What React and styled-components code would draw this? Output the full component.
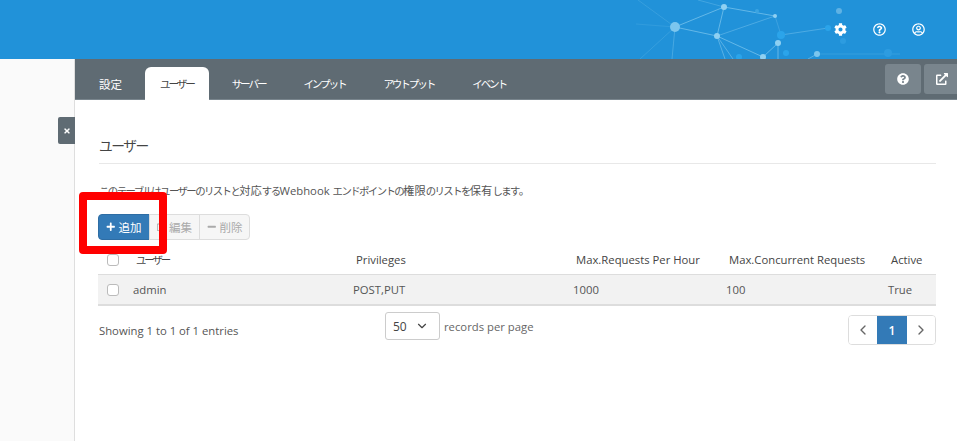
import React from 'react';
import styled, { createGlobalStyle } from 'styled-components';
import {
	FaCog,
	FaRegQuestionCircle,
	FaRegUserCircle,
	FaQuestionCircle,
	FaExternalLinkAlt,
	FaTimes,
	FaPlus,
	FaMinus,
	FaRegEdit,
} from 'react-icons/fa';
import { ChevronDown, ChevronLeft, ChevronRight } from 'lucide-react';

const TABS = ['設定', 'ユーザー', 'サーバー', 'インプット', 'アウトプット', 'イベント'];
const COLUMNS = '34px 220px 220px 153px 162px 1fr';

const NODES = [
	[675, 27, 5, '#7cc6ee'],
	[724, 7, 3, '#8fd0f2'],
	[717, 36, 3, '#8fd0f2'],
	[775, 16, 2, '#8fd0f2'],
	[778, 43, 3, '#8fd0f2'],
	[763, 57, 3, '#8fd0f2'],
	[817, 54, 3, '#7cc6ee'],
	[781, 35, 4, '#2ba4ea'],
	[786, 53, 3, '#2ba4ea'],
	[739, 57, 3, '#2ba4ea'],
	[757, 11, 2, '#3aa4e2'],
	[828, 28, 3, '#2ba4ea'],
	[839, 11, 3, '#5fb2e4'],
	[843, 41, 3, '#2d9ce0'],
	[888, 53, 4, '#2d9ce0'],
];
const LINES = [
	[675, 27, 724, 7, 0.6],
	[724, 7, 775, 16, 0.6],
	[724, 7, 717, 36, 0.6],
	[675, 27, 717, 36, 0.6],
	[717, 36, 775, 16, 0.4],
	[717, 36, 763, 57, 0.6],
	[763, 57, 778, 43, 0.6],
	[778, 43, 778, 59, 0.6],
	[781, 35, 828, 28, 0.4],
	[775, 16, 781, 35, 0.25],
	[817, 54, 900, 54, 0.2],
	[817, 54, 808, 59, 0.5],
	[717, 36, 725, 59, 0.5],
	[717, 36, 733, 59, 0.5],
	[675, 27, 672, 59, 0.35],
	[675, 27, 640, 59, 0.2],
	[675, 27, 636, 24, 0.15],
	[675, 27, 638, 0, 0.2],
	[724, 7, 698, 0, 0.3],
];

const Network = () => (
	<NetworkSvg viewBox="0 0 957 59">
		{LINES.map(([x1, y1, x2, y2, o], i) => (
			<line key={i} x1={x1} y1={y1} x2={x2} y2={y2} stroke="#8fd0f2" strokeOpacity={o} />
		))}
		{NODES.map(([cx, cy, r, fill], i) => (
			<circle key={i} cx={cx} cy={cy} r={r} fill={fill} />
		))}
	</NetworkSvg>
);

// the reference's Japanese face has narrow kana and full width kanji
const Ja = ({ children }) =>
	children
		.split(/([\u3040-\u30ff]+)/)
		.map((part, i) => (i % 2 ? <Kana key={i}>{part}</Kana> : part));

const App = () => (
	<Page>
		<GlobalStyle />
		<Header>
			<Network />
			<HeaderIcon>
				<FaCog />
			</HeaderIcon>
			<HeaderIcon>
				<FaRegQuestionCircle />
			</HeaderIcon>
			<HeaderIcon>
				<FaRegUserCircle />
			</HeaderIcon>
		</Header>
		<Body>
			<Sidebar>
				<SidebarToggle>
					<FaTimes />
				</SidebarToggle>
			</Sidebar>
			<Main>
				<TabBar>
					{TABS.map((t) => (
						<Tab key={t} active={t === 'ユーザー'}>
							<span>
								<Ja>{t}</Ja>
							</span>
						</Tab>
					))}
					<TabActions>
						<ActionButton>
							<FaQuestionCircle />
						</ActionButton>
						<ActionButton>
							<FaExternalLinkAlt />
						</ActionButton>
					</TabActions>
				</TabBar>
				<Content>
					<Title>
						<Ja>ユーザー</Ja>
					</Title>
					<Description>
						<Ja>このテーブルはユーザーのリストと対応するWebhook エンドポイントの権限のリストを保有します。</Ja>
					</Description>
					<Toolbar>
						<ToolButton primary>
							<FaPlus />
							追加
						</ToolButton>
						<ToolButton disabled>
							<FaRegEdit />
							編集
						</ToolButton>
						<ToolButton disabled>
							<FaMinus />
							削除
						</ToolButton>
						<Annotation />
					</Toolbar>
					<HeadRow>
						<CheckCell>
							<Check />
						</CheckCell>
						<span>
							<Ja>ユーザー</Ja>
						</span>
						<span>Privileges</span>
						<span>Max.Requests Per Hour</span>
						<span>Max.Concurrent Requests</span>
						<span>Active</span>
					</HeadRow>
					<DataRow>
						<CheckCell>
							<Check />
						</CheckCell>
						<span>admin</span>
						<span>POST,PUT</span>
						<span>1000</span>
						<span>100</span>
						<span>True</span>
					</DataRow>
					<Footer>
						<Entries>Showing 1 to 1 of 1 entries</Entries>
						<PerPage>
							<Select>
								50
								<ChevronDown size={14} strokeWidth={2} />
							</Select>
							records per page
						</PerPage>
						<Pager>
							<PageButton>
								<ChevronLeft size={16} />
							</PageButton>
							<PageButton current>1</PageButton>
							<PageButton>
								<ChevronRight size={16} />
							</PageButton>
						</Pager>
					</Footer>
				</Content>
			</Main>
		</Body>
	</Page>
);

const GlobalStyle = createGlobalStyle`
	html, body {
		margin: 0;
		background: #fff;
	}
	body {
		font-family: "Open Sans", "Noto Sans CJK JP", sans-serif;
		font-size: 11.3px;
		color: #555;
	}
`;
const Kana = styled.span`
	font-size: 0.92em;
	letter-spacing: -0.2em;
`;
const Page = styled.div`
	width: 957px;
	height: 441px;
	overflow: hidden;
	display: flex;
	flex-direction: column;
`;
const Header = styled.header`
	position: relative;
	height: 59px;
	flex: none;
	background: #2192d9;
	display: flex;
	align-items: center;
	justify-content: flex-end;
	padding: 0 32px 0 0;
	box-sizing: border-box;
`;
const NetworkSvg = styled.svg`
	position: absolute;
	left: 0;
	top: 0;
	width: 957px;
	height: 59px;
`;
const HeaderIcon = styled.div`
	position: relative;
	width: 13px;
	height: 13px;
	margin-left: 26px;
	color: #fff;
	font-size: 13px;
	line-height: 13px;
	display: flex;
	svg {
		display: block;
	}
`;
const Body = styled.div`
	flex: 1;
	display: flex;
	min-height: 0;
`;
const Sidebar = styled.aside`
	position: relative;
	width: 74px;
	flex: none;
	background: #fafafa;
	border-right: 1px solid #dedede;
`;
const SidebarToggle = styled.div`
	position: absolute;
	right: -1px;
	top: 58px;
	width: 17px;
	height: 27px;
	background: #5f6b73;
	border-radius: 2px 0 0 2px;
	color: #fff;
	font-size: 8px;
	display: flex;
	align-items: center;
	justify-content: center;
`;
const Main = styled.main`
	flex: 1;
	min-width: 0;
	display: flex;
	flex-direction: column;
`;
const TabBar = styled.nav`
	height: 40px;
	flex: none;
	background: #5f6b73;
	border-bottom: 1px solid #79858d;
	display: flex;
	align-items: flex-end;
	gap: 8px;
	padding-left: 9px;
`;
const Tab = styled.div`
	height: 33px;
	padding: 0 15px;
	display: flex;
	align-items: center;
	border-radius: 6px 6px 0 0;
	font-size: 11.5px;
	color: ${(props) => (props.active ? '#444' : '#fff')};
	background: ${(props) => (props.active ? '#fff' : 'transparent')};
	margin-bottom: -1px;
`;
const TabActions = styled.div`
	margin-left: auto;
	align-self: flex-start;
	display: flex;
	gap: 3px;
	padding-top: 5px;
	margin-right: -3px;
`;
const ActionButton = styled.div`
	width: 36px;
	height: 30px;
	background: #79858d;
	border-radius: 3px;
	color: #fff;
	font-size: 12px;
	display: flex;
	align-items: center;
	justify-content: center;
`;
const Content = styled.section`
	flex: 1;
	padding: 0 21px 0 23px;
`;
const Title = styled.h2`
	margin: 35px 0 0 1px;
	padding-bottom: 7px;
	height: 21px;
	line-height: 21px;
	font-size: 14.5px;
	font-weight: 400;
	color: #444;
	border-bottom: 1px solid #e8e8e8;
	${Kana} {
		font-size: 0.95em;
		letter-spacing: -0.11em;
	}
`;
const Description = styled.p`
	margin: 18px 0 0 1px;
	height: 18px;
	line-height: 18px;
	font-size: 11.3px;
	color: #555;
	white-space: nowrap;
	${Kana} {
		letter-spacing: -0.15em;
	}
`;
const Toolbar = styled.div`
	position: relative;
	display: flex;
	margin-top: 14px;
	width: fit-content;
`;
const ToolButton = styled.div`
	height: 26px;
	box-sizing: border-box;
	padding: 0 7px;
	display: flex;
	align-items: center;
	gap: 3px;
	font-size: 11.5px;
	color: ${(props) => (props.primary ? '#fff' : '#aaa')};
	background: ${(props) => (props.primary ? '#337ab7' : '#f6f6f6')};
	border: 1px solid ${(props) => (props.primary ? '#2e6da4' : '#ddd')};
	margin-left: -1px;
	&:first-child {
		margin-left: 0;
		border-radius: 4px 0 0 4px;
	}
	&:nth-child(3) {
		border-radius: 0 4px 4px 0;
		padding-right: 6px;
	}
	svg {
		font-size: 9.5px;
	}
`;
const Annotation = styled.div`
	position: absolute;
	left: -19px;
	top: -22px;
	width: 72px;
	height: 46px;
	border: 8px solid #ff0000;
	border-radius: 4px;
	pointer-events: none;
`;
const HeadRow = styled.div`
	display: grid;
	grid-template-columns: ${COLUMNS};
	align-items: center;
	height: 25px;
	padding-bottom: 2px;
	margin-top: 7px;
	color: #444;
	border-bottom: 1px solid #ddd;
	> span {
		padding-left: 4px;
	}
`;
const DataRow = styled.div`
	display: grid;
	grid-template-columns: ${COLUMNS};
	align-items: center;
	height: 29px;
	background: #f2f2f2;
	border-bottom: 2px solid #ddd;
	color: #555;
	> span {
		padding-left: 1px;
	}
`;
const CheckCell = styled.div`
	padding-left: 9px;
	display: flex;
	align-items: center;
`;
const Check = styled.div`
	width: 10px;
	height: 10px;
	border: 1px solid #bbb;
	border-radius: 3px;
	background: #fff;
`;
const Footer = styled.div`
	display: flex;
	align-items: flex-start;
	padding-top: 6px;
`;
const Entries = styled.div`
	width: 286px;
	padding: 11px 0 0 1px;
	line-height: 16px;
`;
const PerPage = styled.div`
	display: flex;
	align-items: center;
	gap: 4px;
	height: 28px;
	color: #666;
`;
const Select = styled.div`
	width: 36px;
	height: 26px;
	border: 1px solid #ccc;
	border-radius: 3px;
	display: flex;
	align-items: center;
	justify-content: space-between;
	padding: 0 10px 0 7px;
	font-size: 12px;
	color: #444;
`;
const Pager = styled.div`
	margin-left: auto;
	margin-top: 3px;
	display: flex;
	height: 28px;
	border: 1px solid #ddd;
	border-radius: 4px;
	overflow: hidden;
`;
const PageButton = styled.div`
	width: ${(props) => (props.current ? '30px' : '28px')};
	display: flex;
	align-items: center;
	justify-content: center;
	font-weight: 600;
	font-size: 12px;
	color: ${(props) => (props.current ? '#fff' : '#666')};
	background: ${(props) => (props.current ? '#337ab7' : '#fff')};
`;

export default App;
